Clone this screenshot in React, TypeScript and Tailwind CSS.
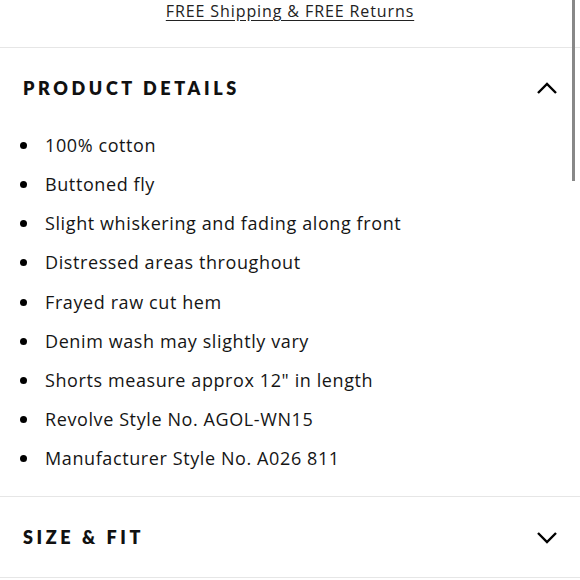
import { useState } from "react";

const details = [
  "100% cotton",
  "Buttoned fly",
  "Slight whiskering and fading along front",
  "Distressed areas throughout",
  "Frayed raw cut hem",
  "Denim wash may slightly vary",
  'Shorts measure approx 12" in length',
  "Revolve Style No. AGOL-WN15",
  "Manufacturer Style No. A026 811",
];

function Chevron({ up }: { up: boolean }) {
  return (
    <svg width="22" height="14" viewBox="0 0 22 14" fill="none" className="shrink-0">
      <path
        d={up ? "M2 12 L11 3 L20 12" : "M2 3 L11 12 L20 3"}
        stroke="#000"
        strokeWidth="2.4"
      />
    </svg>
  );
}

export default function App() {
  const [open, setOpen] = useState({ details: true, size: false });

  return (
    <div className="relative h-[580px] w-[580px] overflow-hidden bg-white text-black">
      <div className="flex h-[47px] justify-center">
        <a
          href="#"
          className="font-['Open_Sans',sans-serif] text-[16px] leading-[22px] tracking-[0.9px] text-[#222] underline underline-offset-[3px]"
        >
          FREE Shipping &amp; FREE Returns
        </a>
      </div>

      <section className="border-t border-[#e6e6e6]">
        <button
          onClick={() => setOpen({ ...open, details: !open.details })}
          className="flex h-[80px] w-full items-center justify-between pl-[23px] pr-[22px]"
        >
          <span className="font-['Lato',sans-serif] text-[18px] font-extrabold tracking-[0.2em] text-[#111]">
            PRODUCT DETAILS
          </span>
          <Chevron up={open.details} />
        </button>
        {open.details && (
          <ul className="-mt-[2px] pb-[18px] pl-[20px] font-['Open_Sans',sans-serif] text-[18px] tracking-[0.6px] text-[#151515]">
            {details.map((d) => (
              <li key={d} className="flex h-[39.15px] items-center">
                <span className="mr-[18px] h-[7px] w-[7px] shrink-0 rounded-full bg-black" />
                {d}
              </li>
            ))}
          </ul>
        )}
      </section>

      <section className="border-y border-[#e6e6e6]">
        <button
          onClick={() => setOpen({ ...open, size: !open.size })}
          className="flex h-[80px] w-full items-center justify-between pl-[23px] pr-[22px]"
        >
          <span className="font-['Lato',sans-serif] text-[18px] font-extrabold tracking-[0.2em] text-[#111]">
            SIZE &amp; FIT
          </span>
          <Chevron up={open.size} />
        </button>
      </section>

      <div className="absolute right-[5px] top-0 h-[181px] w-[3px] bg-[#888]" />
    </div>
  );
}
